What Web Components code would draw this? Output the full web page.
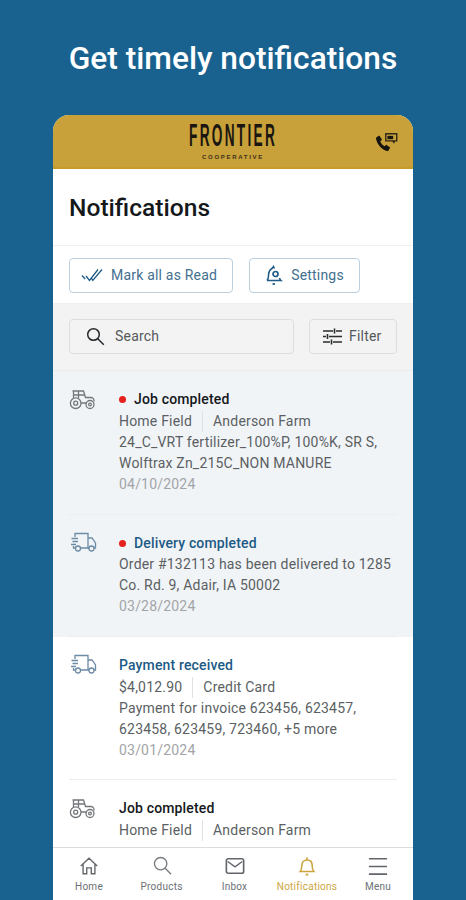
<!DOCTYPE html>
<html lang="en">
<head>
<meta charset="utf-8">
<title>Get timely notifications</title>
<style>
  html, body { margin: 0; height: 100%; }
  body { background: #19628f; font-family: Roboto, "Liberation Sans", sans-serif; overflow: hidden; }
</style>
</head>
<body>
<promo-screen heading="Get timely notifications">
  <app-header></app-header>
  <page-title>Notifications</page-title>
  <action-bar></action-bar>
  <search-bar></search-bar>
  <notif-list>
    <notif-item style="--pb:19px" icon="tractor" title="Job completed" unread shaded meta1="Home Field" meta2="Anderson Farm" date="04/10/2024">24_C_VRT fertilizer_100%P, 100%K, SR S,<br>Wolftrax Zn_215C_NON MANURE</notif-item>
    <notif-item style="--th:22px;--pb:19px" icon="truck" title="Delivery completed" unread shaded link date="03/28/2024">Order #132113 has been delivered to 1285<br>Co. Rd. 9, Adair, IA 50002</notif-item>
    <notif-item icon="truck" title="Payment received" link meta1="$4,012.90" meta2="Credit Card" date="03/01/2024">Payment for invoice 623456, 623457,<br>623458, 623459, 723460, +5 more</notif-item>
    <notif-item style="--tm:2px" icon="tractor" title="Job completed" meta1="Home Field" meta2="Anderson Farm">24_C_VRT fertilizer_100%P, 100%K, SR S,</notif-item>
  </notif-list>
  <bottom-nav></bottom-nav>
</promo-screen>

<script>
const ICONS = {
  tractor: `<svg width="28" height="22" viewBox="0 0 28 22" fill="none" stroke="#73777b" stroke-width="1.300">
    <path d="M4.500 10.500V3.500M3.500 3h11l2 6.500h5.500a3 3 0 0 1 3 3v1"/><path d="M9.500 3v7M4.500 7h11M12 15h5.500"/>
    <circle cx="6.700" cy="15.200" r="5.300"/><circle cx="6.700" cy="15.200" r="2"/>
    <circle cx="21" cy="16.500" r="4"/><circle cx="21" cy="16.500" r="1.400"/></svg>`,
  truck: `<svg width="28" height="22" viewBox="0 0 28 22" fill="none" stroke="#6c8ba5" stroke-width="1.300">
    <path d="M6 5V1.500h13v14.500h-7M6 16H4.500v-2"/><path d="M19 6h4l3.500 5v5h-1.500"/><path d="M19 16h1"/>
    <circle cx="9" cy="16.500" r="2.500"/><circle cx="22.500" cy="16.500" r="2.500"/>
    <path d="M2.500 6.500H9M3.500 9.500H9M2 12.500h5"/></svg>`
};

class PromoScreen extends HTMLElement {
  constructor() {
    super();
    this.attachShadow({ mode: 'open' });
    this.shadowRoot.innerHTML = `
      <style>
        :host { display: flex; flex-direction: column; height: 900px; box-sizing: border-box; padding: 0 53px; }
        h1 { margin: 0 -20px; height: 115px; box-sizing: border-box; padding-top: 40px; text-align: center; color: #fff;
             font: 500 31.700px/38px Roboto, sans-serif; white-space: nowrap; }
        .card { flex: 1; min-height: 0; display: flex; flex-direction: column; background: #fff; overflow: hidden;
                border-radius: 16px 16px 0 0; }
      </style>
      <h1>${this.getAttribute('heading')}</h1>
      <div class="card"><slot></slot></div>
    `;
  }
}

class AppHeader extends HTMLElement {
  constructor() {
    super();
    this.attachShadow({ mode: 'open' });
    this.shadowRoot.innerHTML = `
      <style>
        :host { display: flex; flex: none; height: 54px; background: #c9a13b; position: relative; flex-direction: column;
                align-items: center; border-bottom: 2px solid #c69c27; box-sizing: border-box; color: #1b1710; padding-top: 7px; }
        .name { font: 700 31px/28px "Liberation Sans", sans-serif; letter-spacing: 5.200px; transform: scaleX(.44);
                white-space: nowrap; height: 28px; }
        .sub { font: 700 6px/8px "Liberation Sans", sans-serif; letter-spacing: 1.700px; white-space: nowrap; color: #3c3016; margin-top: 3px; }
        svg { position: absolute; right: 15px; top: 18px; }
      </style>
      <span class="name">FRONTIER</span><span class="sub">COOPERATIVE</span>
      <svg width="23" height="20" viewBox="0 0 24 21" fill="#17150f">
        <path d="M1.500 4.500 4.500 2.500l2.800 4.700-1.800 1.400c.8 2.400 2.300 4.100 4.500 5.200l1.600-1.500 4.300 2.800-1.800 3.200c-.4.700-1 .9-1.700.7C6.500 17 2 11.500 1 6c-.1-.6.100-1.100.5-1.500z"/>
        <path d="M10.500 0h13v9h-2.500l-1 2.300-2-2.300h-7.500zM12 1.500v6h10v-6z" fill-rule="evenodd" opacity=".85"/>
        <rect x="13" y="3" width="6" height="3.500"/>
      </svg>
    `;
  }
}

class PageTitle extends HTMLElement {
  constructor() {
    super();
    this.attachShadow({ mode: 'open' });
    this.shadowRoot.innerHTML = `
      <style>
        :host { display: block; flex: none; height: 77px; box-sizing: border-box; padding: 24px 16px 0;
                font: 500 24.600px/30px Roboto, sans-serif; color: #15181b; border-bottom: 1px solid #f0f0f0; }
      </style>
      <slot></slot>
    `;
  }
}

class ActionBar extends HTMLElement {
  constructor() {
    super();
    this.attachShadow({ mode: 'open' });
    this.shadowRoot.innerHTML = `
      <style>
        :host { display: flex; flex: none; gap: 16px; height: 57px; box-sizing: border-box; padding: 12px 16px 0; }
        button { height: 35px; box-sizing: border-box; display: flex; align-items: center; gap: 8px; background: #fff;
                 border: 1px solid #bccfdc; border-radius: 4px; padding: 0 15px 1px 11px; color: #43708f;
                 font: 400 14px/18px Roboto, sans-serif; letter-spacing: .2px; }
        .s { padding: 0 15px 1px 15px; }
      </style>
      <button>
        <svg width="22" height="14" viewBox="0 0 22 14" fill="none" stroke="#1d5a86" stroke-width="1.300"><path d="M1 7.500l3.200 3.500M5 8l3.500 4.500L17 1.500M10 9.500l1.800 3L21 1.500"/></svg>
        Mark all as Read
      </button>
      <button class="s">
        <svg width="18" height="21" viewBox="0 0 18 21" fill="none" stroke="#1d5a86" stroke-width="1.500"><path d="M2 15.500c1.200-1.300 1.500-2.500 1.500-5 0-3 1.500-6 4-7.500l1-1.500 1 2M2 15.500h14c-1-.8-1.300-1.500-1.500-2.500"/><circle cx="10.500" cy="9" r="2.500" stroke-width="1.700"/><path d="M7.500 19h2.500" stroke-width="1.700"/></svg>
        Settings
      </button>
    `;
  }
}

class SearchBar extends HTMLElement {
  constructor() {
    super();
    this.attachShadow({ mode: 'open' });
    this.shadowRoot.innerHTML = `
      <style>
        :host { display: flex; flex: none; gap: 15px; height: 68px; box-sizing: border-box; padding: 15px 16px 0;
                background: #f3f3f3; border-bottom: 1px solid #e9ebed; border-top: 1px solid #efefef; }
        .box { height: 35px; box-sizing: border-box; display: flex; align-items: center; border: 1px solid #dedede; padding-bottom: 1px;
               border-radius: 4px; color: #55595c; font: 400 14px/18px Roboto, sans-serif; letter-spacing: .2px; background: #f3f3f3; }
        .search { flex: 1; padding-left: 16px; gap: 10px; }
        .filter { width: 88px; padding-left: 13px; gap: 7px; flex: none; }
      </style>
      <div class="box search">
        <svg width="19" height="19" viewBox="0 0 19 19" fill="none" stroke="#26292b" stroke-width="1.500"><circle cx="7.500" cy="7.500" r="5.800"/><path d="M11.800 11.800l6 6"/></svg>
        Search
      </div>
      <div class="box filter">
        <svg width="19" height="17" viewBox="0 0 19 17" fill="none" stroke="#2a2c2e" stroke-width="1.600"><path d="M0 3h10M13 3h6M11.500 .5v5M0 8.500h3M6 8.500h13M4.500 6v5M0 14h7M10 14h9M8.500 11.500v5"/></svg>
        Filter
      </div>
    `;
  }
}

class NotifList extends HTMLElement {
  constructor() {
    super();
    this.attachShadow({ mode: 'open' });
    this.shadowRoot.innerHTML = `
      <style>:host { display: block; flex: 1; min-height: 0; overflow: hidden; }</style>
      <slot></slot>
    `;
  }
}

class NotifItem extends HTMLElement {
  constructor() {
    super();
    this.attachShadow({ mode: 'open' });
    const meta1 = this.getAttribute('meta1');
    const meta2 = this.getAttribute('meta2');
    const date = this.getAttribute('date');
    this.shadowRoot.innerHTML = `
      <style>
        :host { display: block; background: #fff; color: #5b5f63; font: 400 14px/21px Roboto, sans-serif; letter-spacing: .2px; }
        :host([shaded]) { background: #f1f4f7; }
        .row { display: flex; margin: 0 16px; padding: 17px 0 var(--pb, 18px); border-bottom: 1px solid #ebedef; }
        .icon { width: 50px; flex: none; height: 22px; }
        .title { display: flex; align-items: center; gap: 8px; font-weight: 500; color: #15181b; height: var(--th, 23px); letter-spacing: .15px; }
        :host([link]) .title { color: #1d5a86; }
        .dot { width: 7px; height: 7px; border-radius: 50%; background: #e5211d; }
        .meta { display: flex; height: 21px; }
        .meta span + span { border-left: 1px solid #dfe2e4; margin-left: 10px; padding-left: 10px; }
        .text { margin-top: var(--tm, 0); }
        .date { color: #a2a5a8; }
      </style>
      <div class="row">
        <div class="icon">${ICONS[this.getAttribute('icon')]}</div>
        <div class="body">
          <div class="title">${this.hasAttribute('unread') ? '<i class="dot"></i>' : ''}${this.getAttribute('title')}</div>
          ${meta1 ? `<div class="meta"><span>${meta1}</span><span>${meta2}</span></div>` : ''}
          <div class="text"><slot></slot></div>
          ${date ? `<div class="date">${date}</div>` : ''}
        </div>
      </div>
    `;
  }
}

class BottomNav extends HTMLElement {
  constructor() {
    super();
    this.attachShadow({ mode: 'open' });
    const tabs = [
      ['Home', '<path d="M2 11 11 2.500 20 11M4.500 9v10.500h4V13h5v6.500h4V9" stroke="#62666a"/>'],
      ['Products', '<circle cx="9.500" cy="8.500" r="6.800" stroke="#777b7e"/><path d="M14.500 13.500l6.500 6.500" stroke="#777b7e"/>'],
      ['Inbox', '<rect x="1.500" y="3" width="19" height="16" rx="2" stroke="#62666a" stroke-width="1.800"/><path d="M3 6l8 6 8-6" stroke="#62666a"/>'],
      ['Notifications', '<path d="M3.500 17c1.500-1.500 1.800-3 1.800-6.500 0-3.500 2.200-6 5.700-6s5.700 2.500 5.700 6c0 3.500.3 5 1.800 6.500z" stroke="#cda53f" stroke-width="1.700"/><path d="M11 1.500v3M9.500 20.500h3" stroke="#cda53f" stroke-width="1.700"/>'],
      ['Menu', '<path d="M1 3h20M1 11.500h20M1 20h20" stroke="#62666a" stroke-width="1.800"/>']
    ];
    this.shadowRoot.innerHTML = `
      <style>
        :host { display: grid; grid-template-columns: 72px 73px 73px 72px 70px; flex: none; height: 53px; background: #fff;
                border-top: 1px solid #dcdcdc; box-sizing: border-box; font: 400 10px/12px Roboto, sans-serif; color: #6c7074; letter-spacing: .25px; }
        div { display: flex; flex-direction: column; align-items: center; padding-top: 8px; gap: 5px; white-space: nowrap; }
        .on { color: #cda53f; }
        svg { display: block; }
      </style>
      ${tabs.map(([label, d], i) => `<div class="${i === 3 ? 'on' : ''}">
        <svg width="20" height="20" viewBox="0 0 22 22" fill="none" stroke-width="1.500">${d}</svg>${label}</div>`).join('')}
    `;
  }
}

customElements.define('promo-screen', PromoScreen);
customElements.define('app-header', AppHeader);
customElements.define('page-title', PageTitle);
customElements.define('action-bar', ActionBar);
customElements.define('search-bar', SearchBar);
customElements.define('notif-list', NotifList);
customElements.define('notif-item', NotifItem);
customElements.define('bottom-nav', BottomNav);
</script>
</body>
</html>
